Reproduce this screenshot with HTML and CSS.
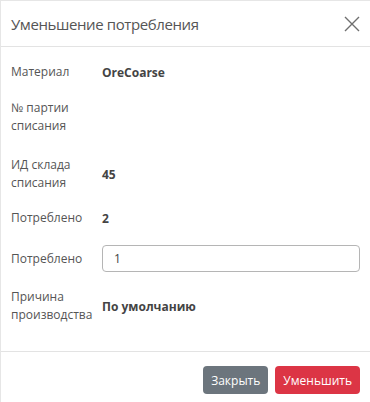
FILE: index.html
```html
<!DOCTYPE html>
<html lang="ru">
<head>
    <meta charset="UTF-8">
    <meta name="viewport" content="width=device-width, initial-scale=1.0">
    <title>Уменьшение потребления</title>
    <link rel="stylesheet" href="styles.css">
</head>
<body>
    <div class="modal">
        <header class="modal-header">
            <h2>Уменьшение потребления</h2>
            <button class="close" type="button" aria-label="Закрыть">
                <svg width="16" height="16" viewBox="0 0 16 16">
                    <path d="M1 1L15 15M15 1L1 15" stroke="#6f6f6f" stroke-width="1.4" fill="none"/>
                </svg>
            </button>
        </header>
        <main class="modal-body">
            <div class="row">
                <span class="label">Материал</span>
                <span class="value">OreCoarse</span>
            </div>
            <div class="row">
                <span class="label">№ партии списания</span>
                <span class="value"></span>
            </div>
            <div class="row row-stock">
                <span class="label">ИД склада списания</span>
                <span class="value">45</span>
            </div>
            <div class="row">
                <span class="label">Потреблено</span>
                <span class="value">2</span>
            </div>
            <div class="row row-input">
                <label class="label" for="amount">Потреблено</label>
                <input type="text" id="amount" value="1">
            </div>
            <div class="row">
                <span class="label">Причина производства</span>
                <span class="value">По умолчанию</span>
            </div>
        </main>
        <footer class="modal-footer">
            <button class="btn btn-grey" type="button">Закрыть</button>
            <button class="btn btn-red" type="button">Уменьшить</button>
        </footer>
    </div>
</body>
</html>
```

FILE: styles.css
```css
body {
    margin: 0;
    padding: 0;
    background: #fff;
    font-family: 'Open Sans', 'Noto Sans', sans-serif;
    color: #555;
}

.modal {
    width: 370px;
    height: 402px;
    box-sizing: border-box;
    border-left: 1px solid #e6e6e6;
    border-top: 1px solid #e6e6e6;
}

.modal-header {
    display: flex;
    align-items: center;
    justify-content: space-between;
    height: 45px;
    padding: 0 10px 0 10px;
    border-bottom: 1px solid #e3e3e3;
}

.modal-header h2 {
    margin: 0;
    font-size: 15px;
    font-weight: 400;
    letter-spacing: -0.4px;
    color: #555;
}

.close {
    border: none;
    background: none;
    padding: 0;
    width: 16px;
    height: 16px;
    cursor: pointer;
}

.modal-body {
    padding: 7px 10px 18px 10px;
}

.row {
    display: flex;
    align-items: center;
    padding: 9px 0;
}

.row-stock {
    padding: 12px 0 8px 0;
}

.label {
    width: 91px;
    flex-shrink: 0;
    font-size: 12px;
    line-height: 18px;
    color: #555;
    padding-right: 8px;
    box-sizing: border-box;
}

.value {
    font-size: 12px;
    font-weight: 700;
    color: #444;
}

.row-input {
    padding: 9px 0 7px 0;
}

.row-input input {
    flex: 1;
    height: 27px;
    box-sizing: border-box;
    border: 1px solid #b5b5b5;
    border-radius: 4px;
    padding: 0 11px;
    font-family: inherit;
    font-size: 12px;
    color: #444;
}

.modal-footer {
    display: flex;
    justify-content: flex-end;
    gap: 7px;
    padding: 14px 10px 0 10px;
    border-top: 1px solid #e3e3e3;
}

.btn {
    height: 28px;
    border: none;
    border-radius: 4px;
    color: #fff;
    font-family: inherit;
    font-size: 12px;
    padding: 0 8px;
    cursor: pointer;
}

.btn-grey {
    background-color: #6c757d;
}

.btn-red {
    background-color: #dc3545;
}
```
